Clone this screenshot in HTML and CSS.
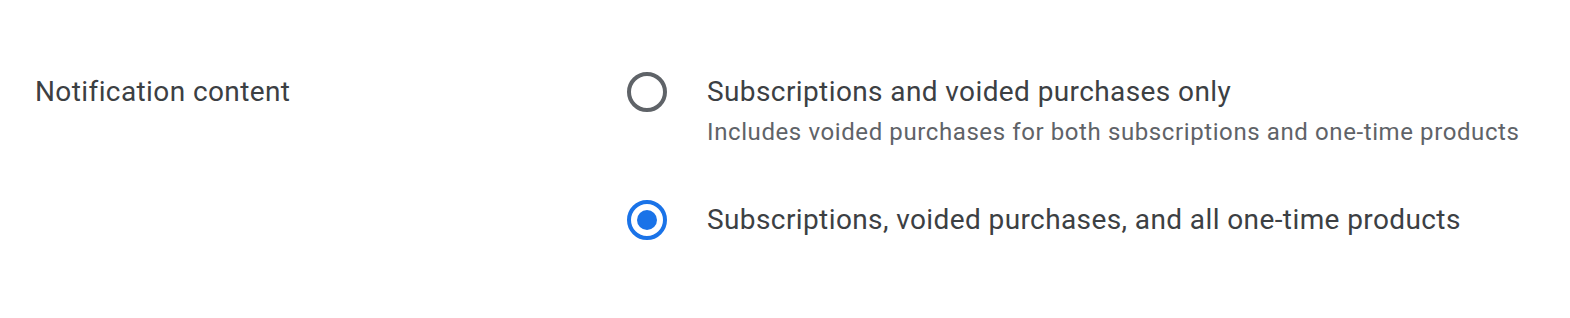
FILE: index.html
```html
<!DOCTYPE html>
<html>
<head>
<meta charset="utf-8">
<link rel="stylesheet" href="styles.css">
</head>
<body>
<div class="setting">
  <div class="label">Notification content</div>
  <div class="options">
    <div class="option">
      <span class="radio"></span>
      <div class="text">
        <div class="main">Subscriptions and voided purchases only</div>
        <div class="sub">Includes voided purchases for both subscriptions and one-time products</div>
      </div>
    </div>
    <div class="option">
      <span class="radio checked"></span>
      <div class="text">
        <div class="main">Subscriptions, voided purchases, and all one-time products</div>
      </div>
    </div>
  </div>
</div>
</body>
</html>
```
FILE: styles.css
```css
html, body {
  margin: 0;
  padding: 0;
  background: #fff;
  font-family: Roboto, "Noto Sans", sans-serif;
}
.setting {
  display: flex;
  padding: 72px 0 0 35px;
}
.label {
  width: 592px;
  font-size: 28px;
  letter-spacing: 0.4px;
  line-height: 40px;
  color: #3c4043;
}
.options {
  display: flex;
  flex-direction: column;
  gap: 48px;
}
.option {
  display: flex;
  gap: 40px;
}
.radio {
  box-sizing: border-box;
  width: 40px;
  height: 40px;
  border: 4px solid #5f6368;
  border-radius: 50%;
  flex: none;
  display: flex;
  align-items: center;
  justify-content: center;
}
.radio.checked {
  border-color: #1a73e8;
}
.radio.checked::after {
  content: "";
  width: 20px;
  height: 20px;
  border-radius: 50%;
  background: #1a73e8;
}
.main {
  font-size: 28px;
  letter-spacing: 0.4px;
  line-height: 40px;
  color: #3c4043;
}
.sub {
  font-size: 24px;
  line-height: 40px;
  color: #5f6368;
  letter-spacing: 0.6px;
}
```
